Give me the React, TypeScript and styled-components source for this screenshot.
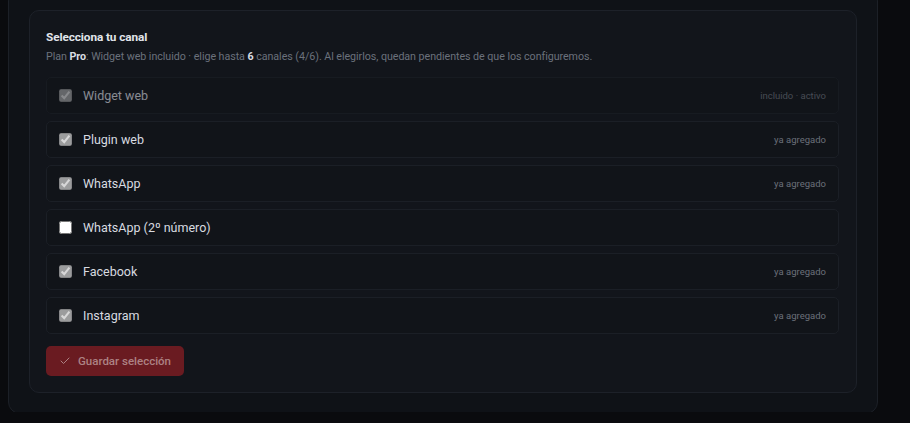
import { createGlobalStyle } from "styled-components"
import styled from "styled-components"
import { Check } from "lucide-react"

type Channel = {
  label: string
  checked: boolean
  locked: boolean
  note?: string
  muted?: boolean
}

const channels: Channel[] = [
  { label: "Widget web", checked: true, locked: true, note: "incluido · activo", muted: true },
  { label: "Plugin web", checked: true, locked: true, note: "ya agregado" },
  { label: "WhatsApp", checked: true, locked: true, note: "ya agregado" },
  { label: "WhatsApp (2º número)", checked: false, locked: false },
  { label: "Facebook", checked: true, locked: true, note: "ya agregado" },
  { label: "Instagram", checked: true, locked: true, note: "ya agregado" },
]

const GlobalStyle = createGlobalStyle`
  html, body {
    margin: 0;
    padding: 0;
    background: #0a0b0e;
    font-family: "Roboto", "Liberation Sans", sans-serif;
    overflow: hidden;
  }
`

const App = () => {
  return (
    <>
      <GlobalStyle />
      <Page>
        <OuterCard>
          <ChannelCard>
            <Title>Selecciona tu canal</Title>
            <Subtitle>
              Plan <strong>Pro</strong>: Widget web incluido · elige hasta <strong>6</strong> canales (4/6). Al
              elegirlos, quedan pendientes de que los configuremos.
            </Subtitle>
            <ChannelList>
              {channels.map((c) => (
                <ChannelRow key={c.label} $muted={c.muted}>
                  <Box type="checkbox" defaultChecked={c.checked} disabled={c.locked} />
                  <Label>{c.label}</Label>
                  {c.note && <Note>{c.note}</Note>}
                </ChannelRow>
              ))}
            </ChannelList>
            <SaveButton type="button">
              <Check size={12} strokeWidth={2} />
              Guardar selección
            </SaveButton>
          </ChannelCard>
        </OuterCard>
      </Page>
    </>
  )
}

const Page = styled.div`
  height: 423px;
  padding: 0 32px 0 8px;
  box-sizing: border-box;
`

const OuterCard = styled.div`
  margin-top: -11px;
  width: 870px;
  box-sizing: border-box;
  padding: 20px;
  background: #0f1217;
  border: 1px solid #1c2027;
  border-radius: 12px;
`

const ChannelCard = styled.section`
  background: #12151b;
  border: 1px solid #1d2129;
  border-radius: 10px;
  padding: 19px 17px 16px 16px;
`

const Title = styled.h3`
  margin: 0;
  font-size: 11.8px;
  font-weight: 700;
  color: #e1e5eb;
  letter-spacing: -0.1px;
  line-height: 14px;
`

const Subtitle = styled.p`
  margin: 6px 0 0;
  font-size: 10.7px;
  line-height: 13px;
  color: #6b717b;
  letter-spacing: -0.05px;

  strong {
    color: #d9dde3;
    font-weight: 700;
  }
`

const ChannelList = styled.div`
  margin-top: 14px;
  display: flex;
  flex-direction: column;
  gap: 7px;
`

const ChannelRow = styled.label<{ $muted?: boolean }>`
  display: flex;
  align-items: center;
  height: 37px;
  box-sizing: border-box;
  padding: 0 12px 0 12px;
  background: #111419;
  border: 1px solid #1b1f26;
  border-radius: 5px;
  opacity: ${(p) => (p.$muted ? 0.6 : 1)};
`

const Box = styled.input`
  margin: 0;
  width: 13px;
  height: 13px;
`

const Label = styled.span`
  margin-left: 11px;
  font-size: 12.5px;
  color: #d8dbe0;
  flex: 1;
`

const Note = styled.span`
  font-size: 9.5px;
  color: #6b7079;
`

const SaveButton = styled.button`
  margin-top: 12px;
  display: inline-flex;
  align-items: center;
  gap: 7px;
  height: 30px;
  padding: 0 13px;
  border: none;
  border-radius: 5px;
  background: #6a1b21;
  color: #ad8284;
  font-family: "Roboto", "Liberation Sans", sans-serif;
  font-size: 11.5px;
  font-weight: 500;
  cursor: pointer;
`

export default App
